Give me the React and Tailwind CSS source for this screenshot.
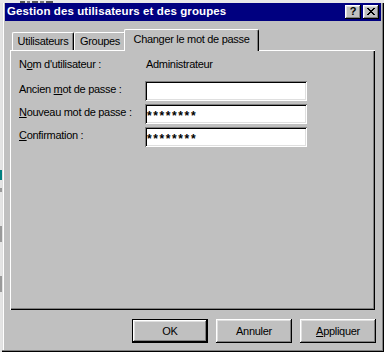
export default function App() {
  const raised =
    "shadow-[inset_-1px_-1px_#000,inset_1px_1px_#fff,inset_-2px_-2px_#808080,inset_2px_2px_#dfdfdf]";
  const sunken =
    "shadow-[inset_1px_1px_#808080,inset_-1px_-1px_#fff,inset_2px_2px_#000,inset_-2px_-2px_#dfdfdf]";
  return (
    <div className="w-[384px] h-[352px] flex flex-col bg-[#c0c0c0] overflow-hidden font-['Liberation_Sans',Arial,sans-serif] text-[11px] tracking-[-0.3px] text-black leading-none">
      <div className="h-[3px] bg-[#e8e8e8] flex items-end">
        <div className="w-[20px]" />
        <div className="h-[2px] w-[46px] flex gap-[2px]">
          <div className="w-[5px] bg-[#555]" />
          <div className="w-[3px] bg-[#777]" />
          <div className="w-[6px] bg-[#555]" />
          <div className="w-[4px] bg-[#777]" />
          <div className="w-[7px] bg-[#555]" />
        </div>
      </div>
      <div className="flex flex-1">
        <div className="w-[2px] flex flex-col bg-[#e4e4e4]">
          <div className="h-[167px]" />
          <div className="h-[10px] bg-[#008080]" />
          <div className="h-[8px]" />
          <div className="h-[4px] bg-[#9a9a9a]" />
          <div className="h-[34px]" />
          <div className="h-[16px] bg-[#9a9a9a]" />
          <div className="h-[34px]" />
          <div className="h-[16px] bg-[#9a9a9a]" />
        </div>
        <div className="flex-1 flex flex-col px-[3px] pb-[3px] shadow-[inset_-1px_-1px_#000,inset_-2px_-2px_#808080,inset_1px_0_#dfdfdf,inset_2px_0_#fff]">
          {/* Title bar */}
          <div className="h-[18px] bg-[#000080] flex items-center pl-[2px] pr-[2px]">
            <span className="flex-1 text-white font-bold text-[11.5px] tracking-[0.1px]">
              Gestion des utilisateurs et des groupes
            </span>
            <div className="flex gap-[2px]">
              <div className={`w-[16px] h-[14px] bg-[#c0c0c0] flex items-center justify-center ${raised}`}>
                <span className="font-bold text-[11px] tracking-normal pb-[1px]">?</span>
              </div>
              <div className={`w-[16px] h-[14px] bg-[#c0c0c0] flex items-center justify-center ${raised}`}>
                <svg width="8" height="7" viewBox="0 0 8 7" shapeRendering="crispEdges" className="mb-[1px]">
                  <path
                    fill="#000"
                    d="M0 0h2v1h-2zM6 0h2v1h-2zM1 1h2v1h-2zM5 1h2v1h-2zM2 2h4v1h-4zM3 3h2v1h-2zM2 4h4v1h-4zM1 5h2v1h-2zM5 5h2v1h-2zM0 6h2v1h-2zM6 6h2v1h-2z"
                  />
                </svg>
              </div>
            </div>
          </div>

          {/* Tabs */}
          <div className="mt-[8px] ml-[5px] mr-[6px] flex flex-col">
            <div className="h-[21px] flex items-end pl-[2px]">
              <div className="w-[62px] h-[18px] flex items-center justify-center border-l border-t border-white border-r border-r-black rounded-tl-[2px] rounded-tr-[2px] shadow-[inset_-1px_0_#808080]">
                Utilisateurs
              </div>
              <div className="w-[52px] h-[18px] flex items-center justify-center border-t border-l border-white rounded-tl-[2px] rounded-tr-[2px] border-r border-r-black shadow-[inset_-1px_0_#808080]">
                Groupes
              </div>
              <div className="relative z-10 -ml-[2px] -mb-px w-[135px] h-[22px] bg-[#c0c0c0] flex items-center justify-center pb-[2px] border-l border-t border-white rounded-tl-[2px] rounded-tr-[2px] border-r border-r-black shadow-[inset_-1px_0_#808080]">
                Changer le mot de passe
              </div>
            </div>
            <div className="h-[260px] shadow-[inset_1px_1px_#fff,inset_-1px_-1px_#000,inset_-2px_-2px_#808080] pl-[9px] pt-[6px] flex flex-col">
              <div className="h-[19px] flex items-center">
                <div className="w-[126px] pb-[2px]">
                  N<span className="underline underline-offset-[1px]">o</span>m d'utilisateur :
                </div>
                <div className="pb-[2px] pl-[1px]">Administrateur</div>
              </div>
              <div className="mt-[6px] flex flex-col gap-[3px]">
                <div className="h-[20px] flex items-center">
                  <div className="w-[126px] pb-[4px]">
                    Ancien <span className="underline underline-offset-[1px]">m</span>ot de passe :
                  </div>
                  <div className={`w-[162px] h-[20px] bg-white ${sunken}`} />
                </div>
                <div className="h-[20px] flex items-center">
                  <div className="w-[126px] pb-[4px]">
                    <span className="underline underline-offset-[1px]">N</span>ouveau mot de passe :
                  </div>
                  <div className={`w-[162px] h-[20px] bg-white flex items-center pl-[2px] ${sunken}`}>
                    <span className="font-bold text-[12px] tracking-[1.6px] pt-[3px]">********</span>
                  </div>
                </div>
                <div className="h-[20px] flex items-center">
                  <div className="w-[126px] pb-[4px]">
                    <span className="underline underline-offset-[1px]">C</span>onfirmation :
                  </div>
                  <div className={`w-[162px] h-[20px] bg-white flex items-center pl-[2px] ${sunken}`}>
                    <span className="font-bold text-[12px] tracking-[1.6px] pt-[3px]">********</span>
                  </div>
                </div>
              </div>
            </div>
          </div>

          {/* Buttons */}
          <div className="mt-[9px] mr-[5px] flex justify-end gap-[8px]">
            <div className="w-[76px] h-[24px] border border-black flex">
              <div className={`flex-1 flex items-center justify-center ${raised}`}>OK</div>
            </div>
            <div className={`w-[76px] h-[24px] flex items-center justify-center ${raised}`}>Annuler</div>
            <div className={`w-[76px] h-[24px] flex items-center justify-center ${raised}`}>
              <span>
                <span className="underline underline-offset-[1px]">A</span>ppliquer
              </span>
            </div>
          </div>
        </div>
      </div>
    </div>
  );
}
